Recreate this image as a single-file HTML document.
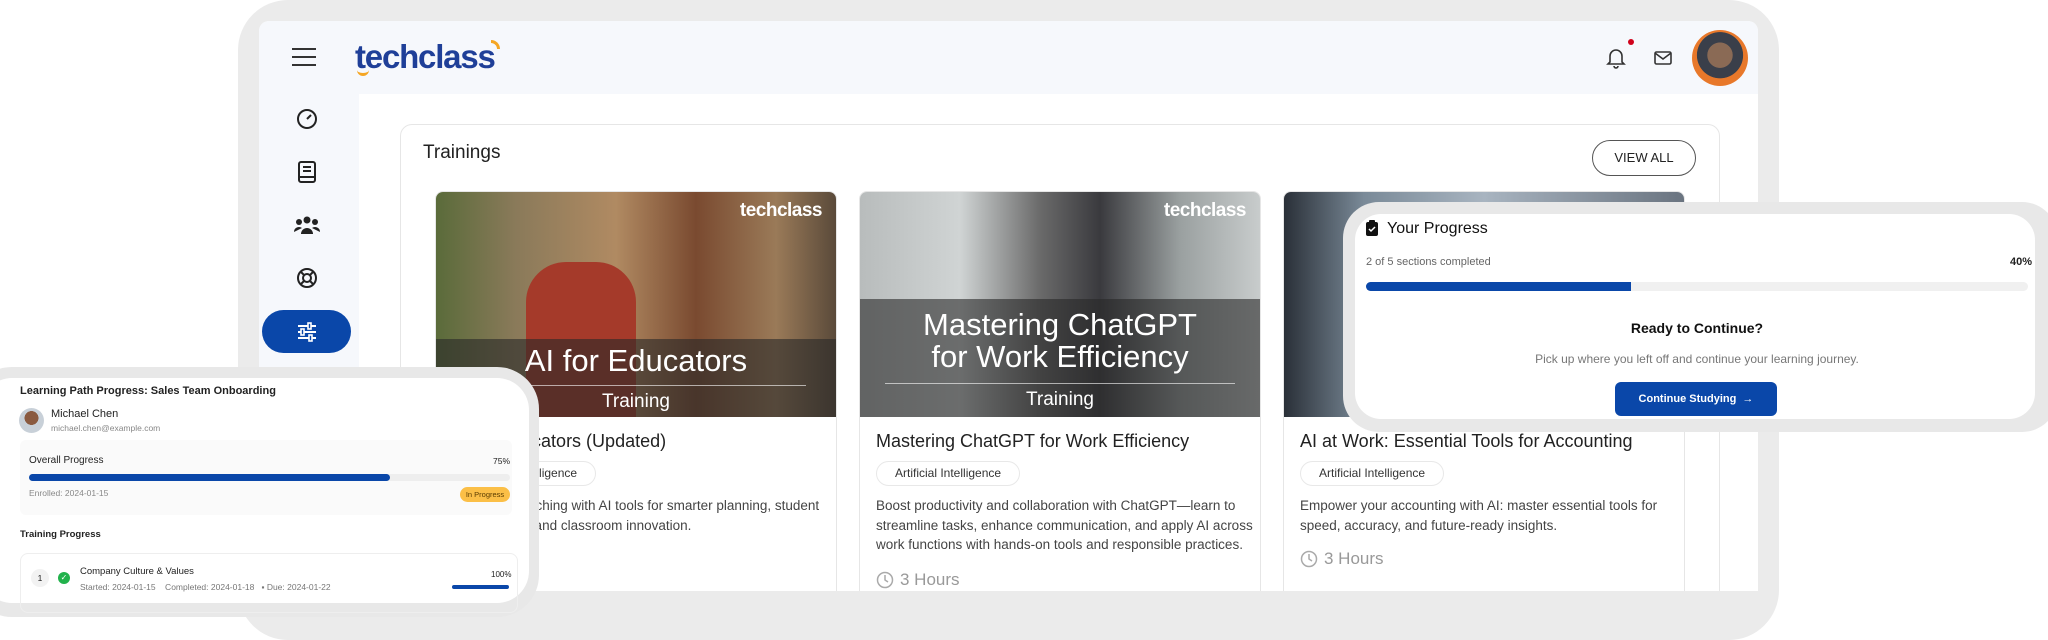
<!DOCTYPE html>
<html><head><meta charset="utf-8"><style>
*{box-sizing:border-box;margin:0;padding:0}
body{width:2048px;height:601px;overflow:hidden;background:#fff;font-family:"Liberation Sans",Arial,sans-serif;position:relative;color:#222}
.abs{position:absolute}
.frame{left:238px;top:0;width:1541px;height:640px;background:#ebebeb;border-radius:50px}
.inner{left:259px;top:21px;width:1499px;height:570px;background:#fff;border-radius:10px 10px 0 0;overflow:hidden}
.hdr{left:0;top:0;width:1499px;height:73px;background:#f6f8fc}
.side{left:0;top:73px;width:100px;height:500px;background:#f6f8fc}
.card{position:absolute;top:170px;width:402px;height:420px;border:1px solid #e6e6e6;border-radius:8px;overflow:hidden;background:#fff}
.img{position:absolute;left:0;top:0;width:100%;height:225px;overflow:hidden}
.band{position:absolute;left:0;bottom:0;width:100%;background:rgba(40,40,40,.6);color:#fff;text-align:center}
.wm{position:absolute;right:14px;top:8px;color:#fff;font-size:19px;font-weight:bold;letter-spacing:-.5px}
.t{position:absolute;left:16px;top:239px;font-size:18px;color:#222;white-space:nowrap}
.chip{position:absolute;left:16px;top:269px;height:25px;padding:0 18px;border:1px solid #e8e8e8;border-radius:13px;font-size:12px;line-height:23px;color:#333}
.d{position:absolute;left:16px;top:304px;width:380px;font-size:13.5px;line-height:19.5px;color:#444}
.h{position:absolute;left:16px;top:378px;font-size:17px;color:#999;display:flex;align-items:center;gap:6px}
</style></head><body>
<div class="abs frame"></div>
<div class="abs inner">
 <div class="abs hdr"></div>
 <div class="abs side"></div>
 <div class="abs" style="left:33px;top:27px;width:24px;height:18px;border-top:2px solid #333;border-bottom:2px solid #333"><div style="margin-top:6px;height:2px;background:#333"></div></div>
 <div class="abs" style="left:96px;top:17px;font-size:33px;font-weight:bold;color:#1f3f98;letter-spacing:-1.2px">techclass</div>
 <div class="abs" style="left:98px;top:47px;width:12px;height:8px;border-bottom:3px solid #f5a623;border-radius:0 0 8px 8px"></div>
 <div class="abs" style="left:232px;top:19px;width:9px;height:9px;border-top:3px solid #f5a623;border-right:3px solid #f5a623;border-radius:0 10px 0 0"></div>
 <svg class="abs" style="left:1347px;top:26px" width="20" height="22" viewBox="0 0 20 22"><path d="M4 15V9a6 6 0 0 1 12 0v6l2 2H2z M8 19a2 2 0 0 0 4 0" fill="none" stroke="#333" stroke-width="1.6"/></svg>
 <div class="abs" style="left:1369px;top:18px;width:6px;height:6px;border-radius:50%;background:#d0021b"></div>
 <svg class="abs" style="left:1395px;top:30px" width="18" height="14" viewBox="0 0 18 14"><rect x="1" y="1" width="16" height="12" rx="1.5" fill="none" stroke="#333" stroke-width="1.6"/><path d="M1 2l8 6 8-6" fill="none" stroke="#333" stroke-width="1.6"/></svg>
 <div class="abs" style="left:1433px;top:9px;width:56px;height:56px;border-radius:50%;background:radial-gradient(circle at 50% 45%,#8a6a55 0 30%,#3a3f4a 31% 55%,#e8782a 56%)"></div>
 <svg class="abs" style="left:37px;top:87px" width="22" height="22"><circle cx="11" cy="11" r="9" fill="none" stroke="#222" stroke-width="2"/><path d="M11 11l4-4" stroke="#222" stroke-width="2"/></svg>
 <svg class="abs" style="left:38px;top:140px" width="20" height="22"><rect x="2" y="1" width="16" height="20" rx="2" fill="none" stroke="#222" stroke-width="2"/><path d="M6 6h8M6 10h8M2 16h16" stroke="#222" stroke-width="2"/></svg>
 <svg class="abs" style="left:35px;top:193px" width="26" height="22"><circle cx="13" cy="6" r="3.5" fill="#222"/><circle cx="5" cy="8" r="3" fill="#222"/><circle cx="21" cy="8" r="3" fill="#222"/><path d="M7 20a6 6 0 0 1 12 0z M0 18a5 5 0 0 1 8-4M26 18a5 5 0 0 0-8-4" fill="#222"/></svg>
 <svg class="abs" style="left:37px;top:246px" width="22" height="22"><circle cx="11" cy="11" r="9" fill="none" stroke="#222" stroke-width="2"/><circle cx="11" cy="11" r="4" fill="none" stroke="#222" stroke-width="2"/><path d="M5 5l3 3M17 5l-3 3M5 17l3-3M17 17l-3-3" stroke="#222" stroke-width="2"/></svg>
 <div class="abs" style="left:3px;top:289px;width:89px;height:43px;border-radius:22px;background:#0a47a9"></div>
 <svg class="abs" style="left:36px;top:300px" width="24" height="22"><path d="M3 5h18M3 11h18M3 17h18" stroke="#fff" stroke-width="2"/><rect x="13" y="2" width="3" height="6" fill="#0a47a9" stroke="#fff" stroke-width="1.6"/><rect x="6" y="8" width="3" height="6" fill="#0a47a9" stroke="#fff" stroke-width="1.6"/><rect x="14" y="14" width="3" height="6" fill="#0a47a9" stroke="#fff" stroke-width="1.6"/></svg>
 <div class="abs" style="left:141px;top:103px;width:1320px;height:520px;border:1px solid #e6e6e6;border-radius:12px;background:#fff"></div>
 <div class="abs" style="left:164px;top:121px;font-size:19px;color:#222">Trainings</div>
 <div class="abs" style="left:1333px;top:119px;width:104px;height:36px;border:1px solid #555;border-radius:18px;font-size:13px;line-height:34px;text-align:center;color:#222">VIEW ALL</div>
 <div class="card" style="left:176px">
  <div class="img" style="background:linear-gradient(90deg,#5a6b3a 0%,#8a7a5a 20%,#b08a62 45%,#7a4a30 65%,#9a7a58 85%,#5a4a3a)">
   <div class="abs" style="left:90px;top:70px;width:110px;height:155px;border-radius:40px 40px 0 0;background:#a53a2a"></div>
   <div class="wm">techclass</div>
   <div class="band" style="height:78px"><div style="font-size:31px;margin-top:4px">AI for Educators</div><div style="width:340px;margin:6px auto 0;border-top:1px solid rgba(255,255,255,.6)"></div><div style="font-size:19px;margin-top:5px">Training</div></div>
  </div>
  <div class="t">AI for Educators (Updated)</div>
  <div class="chip">Artificial Intelligence</div>
  <div class="d">Transform teaching with AI tools for smarter planning, student engagement, and classroom innovation.</div>
 </div>
 <div class="card" style="left:600px">
  <div class="img" style="background:linear-gradient(90deg,#b8bcbc 0%,#d0d4d4 25%,#6a6a6a 45%,#3a3a3e 60%,#9aa0a0 80%,#c8cccc)">
   <div class="wm">techclass</div>
   <div class="band" style="height:118px"><div style="font-size:31px;line-height:32px;margin-top:10px">Mastering ChatGPT<br>for Work Efficiency</div><div style="width:350px;margin:10px auto 0;border-top:1px solid rgba(255,255,255,.6)"></div><div style="font-size:19px;margin-top:5px">Training</div></div>
  </div>
  <div class="t">Mastering ChatGPT for Work Efficiency</div>
  <div class="chip">Artificial Intelligence</div>
  <div class="d">Boost productivity and collaboration with ChatGPT—learn to streamline tasks, enhance communication, and apply AI across work functions with hands-on tools and responsible practices.</div>
  <div class="h"><svg width="18" height="18"><circle cx="9" cy="9" r="7.5" fill="none" stroke="#aaa" stroke-width="1.5"/><path d="M9 4v5l3 2" fill="none" stroke="#aaa" stroke-width="1.5"/></svg>3 Hours</div>
 </div>
 <div class="card" style="left:1024px">
  <div class="img" style="background:linear-gradient(90deg,#2a3038 0%,#7a8a98 20%,#a8b4c0 50%,#6a7480)"></div>
  <div class="t">AI at Work: Essential Tools for Accounting</div>
  <div class="chip">Artificial Intelligence</div>
  <div class="d">Empower your accounting with AI: master essential tools for speed, accuracy, and future-ready insights.</div>
  <div class="h" style="top:357px"><svg width="18" height="18"><circle cx="9" cy="9" r="7.5" fill="none" stroke="#aaa" stroke-width="1.5"/><path d="M9 4v5l3 2" fill="none" stroke="#aaa" stroke-width="1.5"/></svg>3 Hours</div>
 </div>
</div>

<div class="abs" style="left:-30px;top:367px;width:569px;height:250px;background:#e8e8e8;border-radius:42px"></div>
<div class="abs" style="left:-20px;top:378px;width:549px;height:225px;background:#fff;border-radius:32px"></div>
<div class="abs" style="left:20px;top:385px;font-size:11px;font-weight:bold;color:#222">Learning Path Progress: Sales Team Onboarding</div>
<div class="abs" style="left:19px;top:408px;width:25px;height:25px;border-radius:50%;background:radial-gradient(circle at 50% 40%,#8a5a40 0 35%,#c8d0d8 36%)"></div>
<div class="abs" style="left:51px;top:408px;font-size:11px;color:#222">Michael Chen</div>
<div class="abs" style="left:51px;top:423px;font-size:8.5px;color:#888">michael.chen@example.com</div>
<div class="abs" style="left:20px;top:440px;width:492px;height:75px;background:#fafafa;border-radius:6px"></div>
<div class="abs" style="left:29px;top:455px;font-size:10px;color:#222">Overall Progress</div>
<div class="abs" style="left:493px;top:456px;font-size:8.5px;color:#222">75%</div>
<div class="abs" style="left:29px;top:474px;width:481px;height:7px;background:#eee;border-radius:4px"><div style="width:361px;height:7px;background:#0a47a9;border-radius:4px"></div></div>
<div class="abs" style="left:29px;top:488px;font-size:8.5px;color:#888">Enrolled: 2024-01-15</div>
<div class="abs" style="left:460px;top:487px;width:50px;height:15px;border-radius:8px;background:#fbbf47;font-size:7.5px;line-height:15px;text-align:center;color:#5a3c00">In Progress</div>
<div class="abs" style="left:20px;top:529px;font-size:9.5px;font-weight:bold;color:#222">Training Progress</div>
<div class="abs" style="left:20px;top:553px;width:498px;height:60px;border:1px solid #eee;border-radius:8px"></div>
<div class="abs" style="left:31px;top:569px;width:18px;height:18px;border-radius:50%;background:#f2f2f2;font-size:8.5px;line-height:18px;text-align:center">1</div>
<div class="abs" style="left:58px;top:572px;width:12px;height:12px;border-radius:50%;background:#22b24c;color:#fff;font-size:8px;line-height:12px;text-align:center">✓</div>
<div class="abs" style="left:80px;top:566px;font-size:9.5px;color:#222">Company Culture &amp; Values</div>
<div class="abs" style="left:80px;top:582px;font-size:8.5px;color:#777;white-space:nowrap">Started: 2024-01-15 &nbsp;&nbsp; Completed: 2024-01-18 &nbsp;&nbsp;▪ Due: 2024-01-22</div>
<div class="abs" style="left:491px;top:570px;font-size:8px;color:#222">100%</div>
<div class="abs" style="left:452px;top:585px;width:57px;height:4px;background:#0a47a9;border-radius:2px"></div>

<div class="abs" style="left:1343px;top:202px;width:715px;height:230px;background:#e8e8e8;border-radius:36px"></div>
<div class="abs" style="left:1355px;top:214px;width:680px;height:205px;background:#fff;border-radius:26px"></div>
<svg class="abs" style="left:1366px;top:220px" width="12" height="16"><rect x="0" y="2" width="12" height="14" rx="2" fill="#111"/><rect x="3" y="0" width="6" height="4" rx="1" fill="#111"/><path d="M3 9l2 2 4-4" fill="none" stroke="#fff" stroke-width="1.5"/></svg>
<div class="abs" style="left:1387px;top:220px;font-size:16px;color:#111">Your Progress</div>
<div class="abs" style="left:1366px;top:256px;font-size:11px;color:#666">2 of 5 sections completed</div>
<div class="abs" style="left:2010px;top:256px;font-size:11px;font-weight:bold;color:#222">40%</div>
<div class="abs" style="left:1366px;top:282px;width:662px;height:9px;background:#f0f0f0;border-radius:5px"><div style="width:265px;height:9px;background:#0a47a9;border-radius:5px 0 0 5px"></div></div>
<div class="abs" style="left:1366px;top:320px;width:662px;text-align:center;font-size:14px;font-weight:bold;color:#111">Ready to Continue?</div>
<div class="abs" style="left:1366px;top:352px;width:662px;text-align:center;font-size:12px;color:#777">Pick up where you left off and continue your learning journey.</div>
<div class="abs" style="left:1615px;top:382px;width:162px;height:34px;background:#0a47a9;border-radius:6px;color:#fff;font-size:11px;font-weight:bold;line-height:34px;text-align:center">Continue Studying &nbsp;→</div>
</body></html>
